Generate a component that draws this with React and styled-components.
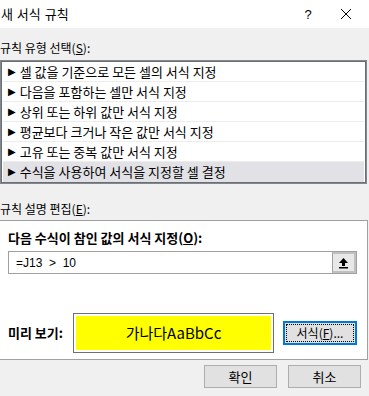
import React from 'react';
import styled, { createGlobalStyle } from 'styled-components';

const GlobalStyle = createGlobalStyle`
  html, body {
    margin: 0;
    padding: 0;
    background: #f0f0f0;
  }
  body {
    font-family: 'Noto Sans CJK KR', 'Noto Sans', sans-serif;
    font-size: 12px;
    color: #000;
  }
`;

const Dialog = styled.div`
  width: 369px;
  height: 396px;
  overflow: hidden;
  background: #f0f0f0;
`;

const TitleBar = styled.div`
  height: 28px;
  background: #fff;
  display: flex;
  align-items: center;
  padding-left: 1px;
`;

const Title = styled.div`
  flex: 1;
  font-size: 13px;
  line-height: 16px;
  word-spacing: 1px;
`;

const TitleButton = styled.div`
  width: ${(p) => p.w}px;
  height: 28px;
  display: flex;
  align-items: center;
  justify-content: center;
  font-family: 'Liberation Sans', sans-serif;
  font-size: 13px;
`;

const Body = styled.div`
  display: flex;
  flex-direction: column;
`;

const SectionLabel = styled.div`
  height: 16px;
  line-height: 16px;
  margin-top: ${(p) => p.top}px;
  margin-bottom: ${(p) => p.bottom}px;
  u {
    text-decoration: underline;
  }
`;

const RuleList = styled.div`
  border: 1px solid #828790;
  box-shadow: inset 0 0 0 1px #6b6e73;
  background: #fff;
  padding: 1px 2px 1px 2px;
  width: 367px;
  height: 124px;
  box-sizing: border-box;
`;

const RuleRow = styled.div`
  height: 20px;
  box-sizing: border-box;
  display: flex;
  align-items: center;
  padding-left: 5px;
  gap: 4px;
  border-bottom: 1px solid ${(p) => (p.last ? 'transparent' : '#ececec')};
  background: ${(p) => (p.selected ? '#e2e2e6' : '#fff')};
  font-size: 13px;
  line-height: 16px;
  white-space: nowrap;
`;

const Arrow = styled.span`
  font-size: 10px;
  line-height: 16px;
  font-family: 'DejaVu Sans', sans-serif;
`;

const Panel = styled.div`
  width: 368px;
  box-sizing: border-box;
  height: 140px;
  background: #fff;
  border: 1px solid #a0a0a0;
  border-left: none;
  padding: 9px 10px 0 8px;
  display: flex;
  flex-direction: column;
`;

const BoldLabel = styled.div`
  font-weight: bold;
  font-size: 13px;
  line-height: 16px;
  height: 16px;
  u {
    text-decoration: underline;
  }
`;

const FormulaBox = styled.div`
  margin-top: 5px;
  height: 23px;
  width: 349px;
  box-sizing: border-box;
  border: 1px solid #a0a0a0;
  display: flex;
  align-items: stretch;
`;

const FormulaText = styled.div`
  flex: 1;
  padding-left: 7px;
  display: flex;
  align-items: center;
  font-family: 'Liberation Sans', sans-serif;
  font-size: 12px;
  white-space: pre;
`;

const RefButton = styled.div`
  width: 21px;
  background: #e8e8e8;
  border: 2px solid #c0c0c0;
  border-left: 1px solid #a0a0a0;
  display: flex;
  align-items: center;
  justify-content: center;
`;

const PreviewRow = styled.div`
  margin-top: 39px;
  display: flex;
  align-items: center;
`;

const PreviewLabel = styled.div`
  font-weight: bold;
  font-size: 13px;
  width: 65px;
  line-height: 16px;
`;

const PreviewBox = styled.div`
  width: 201px;
  height: 40px;
  box-sizing: border-box;
  border: 1px solid #707070;
  padding: 2px;
  background: #fff;
`;

const PreviewFill = styled.div`
  height: 100%;
  background: #ffff00;
  display: flex;
  align-items: center;
  justify-content: center;
  font-size: 15px;
  line-height: 18px;
`;

const FormatButton = styled.div`
  margin-left: 9px;
  width: 74px;
  height: 24px;
  box-sizing: border-box;
  border: 2px solid #0078d7;
  background: #e1e1e1;
  padding: 1px;
  display: flex;
`;

const FocusRing = styled.div`
  flex: 1;
  border: 1px dotted #000;
  display: flex;
  align-items: center;
  justify-content: center;
  line-height: 14px;
  font-size: 12px;
`;

const Footer = styled.div`
  display: flex;
  justify-content: flex-end;
  gap: 11px;
  padding: 5px 8px 0 0;
`;

const DialogButton = styled.div`
  width: 73px;
  height: 23px;
  box-sizing: border-box;
  border: 1px solid #adadad;
  background: #e1e1e1;
  display: flex;
  align-items: center;
  justify-content: center;
  font-size: 13px;
  line-height: 14px;
`;

const rules = [
  '셀 값을 기준으로 모든 셀의 서식 지정',
  '다음을 포함하는 셀만 서식 지정',
  '상위 또는 하위 값만 서식 지정',
  '평균보다 크거나 작은 값만 서식 지정',
  '고유 또는 중복 값만 서식 지정',
  '수식을 사용하여 서식을 지정할 셀 결정',
];

const UpArrow = () => (
  <svg width="11" height="12" viewBox="0 0 11 12">
    <path d="M5.5 1 L10 6 L7 6 L7 9 L4 9 L4 6 L1 6 Z" fill="#000" />
    <rect x="1" y="10" width="9" height="1.5" fill="#000" />
  </svg>
);

const CloseIcon = () => (
  <svg width="12" height="12" viewBox="0 0 12 12">
    <path d="M1 1 L11 11 M11 1 L1 11" stroke="#000" strokeWidth="1" />
  </svg>
);

export default function App() {
  return (
    <>
      <GlobalStyle />
      <Dialog>
        <TitleBar>
          <Title>새 서식 규칙</Title>
          <TitleButton w={30}>?</TitleButton>
          <TitleButton w={46}>
            <CloseIcon />
          </TitleButton>
        </TitleBar>
        <Body>
          <SectionLabel top={12} bottom={4}>
            규칙 유형 선택(<u>S</u>):
          </SectionLabel>
          <RuleList>
            {rules.map((r, i) => (
              <RuleRow key={r} selected={i === rules.length - 1} last={i === rules.length - 1}>
                <Arrow>▶</Arrow>
                {r}
              </RuleRow>
            ))}
          </RuleList>
          <SectionLabel top={17} bottom={3}>
            규칙 설명 편집(<u>E</u>):
          </SectionLabel>
          <Panel>
            <BoldLabel>
              다음 수식이 참인 값의 서식 지정(<u>O</u>):
            </BoldLabel>
            <FormulaBox>
              <FormulaText>{'=J13  >  10'}</FormulaText>
              <RefButton>
                <UpArrow />
              </RefButton>
            </FormulaBox>
            <PreviewRow>
              <PreviewLabel>미리 보기:</PreviewLabel>
              <PreviewBox>
                <PreviewFill>가나다AaBbCc</PreviewFill>
              </PreviewBox>
              <FormatButton>
                <FocusRing>
                  서식(<u>F</u>)...
                </FocusRing>
              </FormatButton>
            </PreviewRow>
          </Panel>
          <Footer>
            <DialogButton>확인</DialogButton>
            <DialogButton>취소</DialogButton>
          </Footer>
        </Body>
      </Dialog>
    </>
  );
}
